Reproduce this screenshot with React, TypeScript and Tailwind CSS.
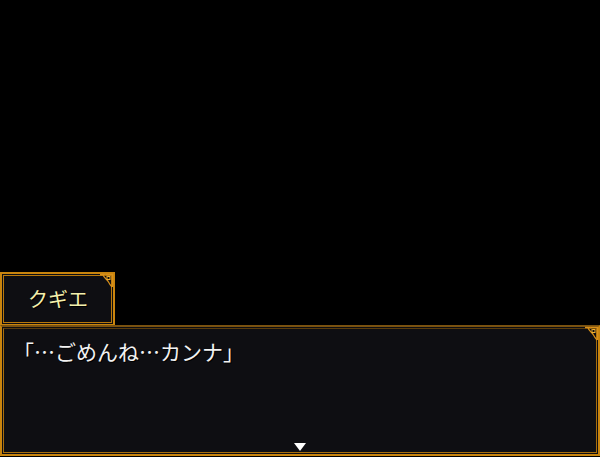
import React from "react";

function Ornament() {
  return (
    <svg
      className="absolute right-[-1px] top-[-1px]"
      width="15"
      height="15"
      viewBox="0 0 15 15"
      fill="none"
    >
      <path d="M1 1.5 H13.5 V14" stroke="#d8901a" strokeWidth="1.5" />
      <path
        d="M4 2 C5 5 8 6 9.5 9 C10.5 11 11.5 12.5 13 14"
        stroke="#d8901a"
        strokeWidth="1.2"
      />
      <rect x="8" y="3.5" width="3" height="3" stroke="#f0b030" strokeWidth="1" />
      <path d="M5 3 C6 2 7 2 8 3.5" stroke="#a06a10" strokeWidth="1" />
    </svg>
  );
}

export default function App() {
  const font = { fontFamily: '"Noto Sans CJK JP", "Noto Sans", sans-serif' };
  return (
    <div className="w-[600px] h-[457px] bg-black flex flex-col overflow-hidden" style={font}>
      <div className="h-[272px]" />
      {/* name box */}
      <div className="relative w-[115px] h-[54px] border-2 border-[#c8840e] bg-[#0e0e12] p-[1px]">
        <div className="h-full w-full border border-[#b8780c] flex items-center justify-center">
          <span
            className="text-[20px] leading-none text-[#f4f0ac] pl-[1px]"
            style={{ textShadow: "1px 1px 0 #000" }}
          >
            クギエ
          </span>
        </div>
        <Ornament />
      </div>
      {/* dialog box */}
      <div className="relative w-[600px] h-[131px] mt-[-1px] border-2 border-[#c8840e] border-t-[#7a5210] bg-[#0e0e12] p-[1px]">
        <div className="h-full w-full border border-[#a86e0c] border-t-[#5a3c0c] relative">
          <div
            className="pl-[9px] pt-[12px] text-[21px] leading-none text-[#f2f2f2]"
            style={{ textShadow: "1px 1px 0 #000" }}
          >
            「…ごめんね…カンナ」
          </div>
          <div className="absolute left-[290px] bottom-[1px] w-0 h-0 border-l-[6px] border-r-[6px] border-t-[8px] border-l-transparent border-r-transparent border-t-white" />
        </div>
        <Ornament />
      </div>
    </div>
  );
}
